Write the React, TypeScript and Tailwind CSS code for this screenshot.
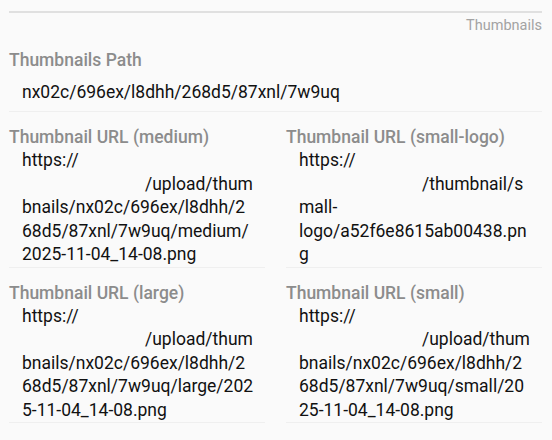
import React from "react";

const font = { fontFamily: "Roboto, 'Noto Sans', Arial, sans-serif" };

function UrlCell({ label, lines }: { label: string; lines: string[] }) {
  return (
    <div className="pt-[13px] border-b border-[#efefef]">
      <div className="text-[17.5px] leading-[24px] font-medium text-[#8c8c8c] whitespace-nowrap">{label}</div>
      <div className="pl-[13px] text-[17.5px] leading-[23.5px] text-[#111111]">
        {lines.map((l, i) => (
          <div key={i} className={i === 1 ? "pl-[123px] whitespace-nowrap" : "whitespace-nowrap"}>
            {l}
          </div>
        ))}
      </div>
    </div>
  );
}

export default function App() {
  return (
    <div style={font} className="w-[552px] h-[440px] bg-[#fafafa] pt-[11px] pl-[9px] pr-[10px] overflow-hidden">
      <div className="h-[2px] bg-[#e0e0e0]" />
      <div className="mt-[3px] text-right text-[14.5px] leading-[20px] text-[#a3a3a3]">Thumbnails</div>
      <div className="mt-[12px] pb-[7px] border-b border-[#efefef]">
        <div className="text-[17.5px] leading-[24px] font-medium text-[#8c8c8c]">Thumbnails Path</div>
        <div className="mt-2 pl-[13px] text-[17.5px] leading-[24px] text-[#111111]">nx02c/696ex/l8dhh/268d5/87xnl/7w9uq</div>
      </div>
      <div className="grid grid-cols-2 gap-x-[21px]">
        <UrlCell
          label="Thumbnail URL (medium)"
          lines={["https://", "/upload/thum", "bnails/nx02c/696ex/l8dhh/2", "68d5/87xnl/7w9uq/medium/", "2025-11-04_14-08.png"]}
        />
        <UrlCell
          label="Thumbnail URL (small-logo)"
          lines={["https://", "/thumbnail/s", "mall-", "logo/a52f6e8615ab00438.pn", "g"]}
        />
        <UrlCell
          label="Thumbnail URL (large)"
          lines={["https://", "/upload/thum", "bnails/nx02c/696ex/l8dhh/2", "68d5/87xnl/7w9uq/large/202", "5-11-04_14-08.png"]}
        />
        <UrlCell
          label="Thumbnail URL (small)"
          lines={["https://", "/upload/thum", "bnails/nx02c/696ex/l8dhh/2", "68d5/87xnl/7w9uq/small/20", "25-11-04_14-08.png"]}
        />
      </div>
    </div>
  );
}
